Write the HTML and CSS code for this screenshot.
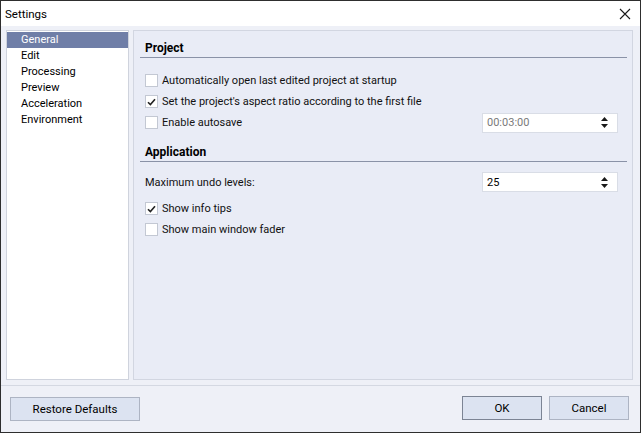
FILE: index.html
```html
<!DOCTYPE html>
<html>
<head>
<meta charset="utf-8">
<link rel="stylesheet" href="styles.css">
</head>
<body>
<div class="window">
  <div class="titlebar">
    <span class="title">Settings</span>
    <svg class="close" width="12" height="12" viewBox="0 0 12 12"><path d="M1 1 L11 11 M11 1 L1 11" stroke="#1a1a1a" stroke-width="1.1" fill="none"/></svg>
  </div>
  <div class="content">
    <div class="list">
      <div class="item selected">General</div>
      <div class="item">Edit</div>
      <div class="item">Processing</div>
      <div class="item">Preview</div>
      <div class="item">Acceleration</div>
      <div class="item">Environment</div>
    </div>
    <div class="panel">
      <div class="header">Project</div>
      <div class="rows first">
        <div class="row"><span class="cb"></span><span class="label">Automatically open last edited project at startup</span></div>
        <div class="row"><span class="cb checked"><svg width="9" height="8" viewBox="0 0 9 8"><path d="M1 4.2 L3.4 6.6 L8 1.2" stroke="#222" stroke-width="1.6" fill="none"/></svg></span><span class="label">Set the project's aspect ratio according to the first file</span></div>
        <div class="row"><span class="cb"></span><span class="label">Enable autosave</span>
          <div class="spin disabled"><span class="val">00:03:00</span><svg class="arrows" width="9" height="13" viewBox="0 0 9 13"><path d="M1 5 L4.5 1 L8 5 Z M1 8 L4.5 12 L8 8 Z" fill="#1a1a1a"/></svg></div>
        </div>
      </div>
      <div class="header second">Application</div>
      <div class="rows">
        <div class="row undo"><span class="label plain">Maximum undo levels:</span>
          <div class="spin"><span class="val">25</span><svg class="arrows" width="9" height="13" viewBox="0 0 9 13"><path d="M1 5 L4.5 1 L8 5 Z M1 8 L4.5 12 L8 8 Z" fill="#1a1a1a"/></svg></div>
        </div>
        <div class="row tips"><span class="cb checked"><svg width="9" height="8" viewBox="0 0 9 8"><path d="M1 4.2 L3.4 6.6 L8 1.2" stroke="#222" stroke-width="1.6" fill="none"/></svg></span><span class="label">Show info tips</span></div>
        <div class="row"><span class="cb"></span><span class="label">Show main window fader</span></div>
      </div>
    </div>
  </div>
  <div class="footer">
    <button class="btn restore">Restore Defaults</button>
    <div class="spacer"></div>
    <button class="btn ok">OK</button>
    <button class="btn cancel">Cancel</button>
  </div>
</div>
</body>
</html>
```

FILE: styles.css
```css
* { box-sizing: border-box; }
html, body { margin: 0; padding: 0; }
body {
  font-family: Roboto, "Noto Sans", sans-serif;
  font-size: 11px;
  color: #111;
}
.window {
  width: 641px;
  height: 433px;
  border: 1px solid #2e2e2e;
  background: #eef0f7;
  display: flex;
  flex-direction: column;
  overflow: hidden;
}
.titlebar {
  height: 25px;
  background: #ffffff;
  display: flex;
  align-items: center;
  padding-left: 4px;
  padding-right: 9px;
}
.title { flex: 1; font-size: 11.5px; color: #000; }
.close { display: block; margin-top: 1px; }
.content {
  display: flex;
  gap: 4px;
  padding: 4px 7px 0 5px;
  height: 354px;
}
.list {
  width: 123px;
  height: 350px;
  background: #ffffff;
  border: 1px solid #cfd3dd;
  padding-top: 1px;
}
.item {
  height: 16px;
  line-height: 16px;
  padding-left: 14px;
  color: #000;
}
.item.selected {
  background: #6f7ea7;
  color: #ffffff;
}
.panel {
  width: 500px;
  height: 350px;
  background: #e9ecf6;
  border: 1px solid #d2d6e1;
  padding: 8px 5px 0 6px;
}
.header {
  height: 19px;
  line-height: 18px;
  font-weight: bold;
  font-size: 12px;
  padding-left: 5px;
  border-bottom: 1px solid #8a92a7;
  color: #000;
}
.header.second { margin-top: 10px; }
.rows { padding: 0 9px 0 5px; margin-top: 10px; }
.rows.first { margin-top: 12px; }
.row {
  height: 21px;
  display: flex;
  align-items: center;
}
.row.undo { height: 20px; }
.row.tips { margin-top: 6px; }
.cb {
  width: 13px;
  height: 13px;
  background: #ffffff;
  border: 1px solid #c3c8d3;
  display: flex;
  align-items: center;
  justify-content: center;
  flex: none;
}
.label { margin-left: 4px; flex: 1; white-space: nowrap; }
.label.plain { margin-left: 0; }
.spin {
  width: 136px;
  height: 20px;
  background: #ffffff;
  border: 1px solid #d9dde6;
  display: flex;
  align-items: center;
  padding-left: 4px;
  padding-right: 8px;
  flex: none;
}
.val { flex: 1; color: #000; }
.spin.disabled .val { color: #7a7a7a; }
.arrows { display: block; }
.footer {
  border-top: 1px solid #d4d8e2;
  margin-top: 5px;
  flex: 1;
  display: flex;
  align-items: flex-start;
  padding: 10px 11px 0 9px;
  gap: 7px;
}
.spacer { flex: 1; }
.btn {
  height: 24px;
  font-family: Roboto, "Noto Sans", sans-serif;
  font-size: 11.5px;
  color: #000;
  background: #dce3f1;
  border: 1px solid #adb4c3;
  padding: 0;
  margin: 0;
}
.restore { width: 130px; margin-top: 1px; }
.ok { width: 80px; border-color: #7c8494; }
.cancel { width: 80px; }
```
